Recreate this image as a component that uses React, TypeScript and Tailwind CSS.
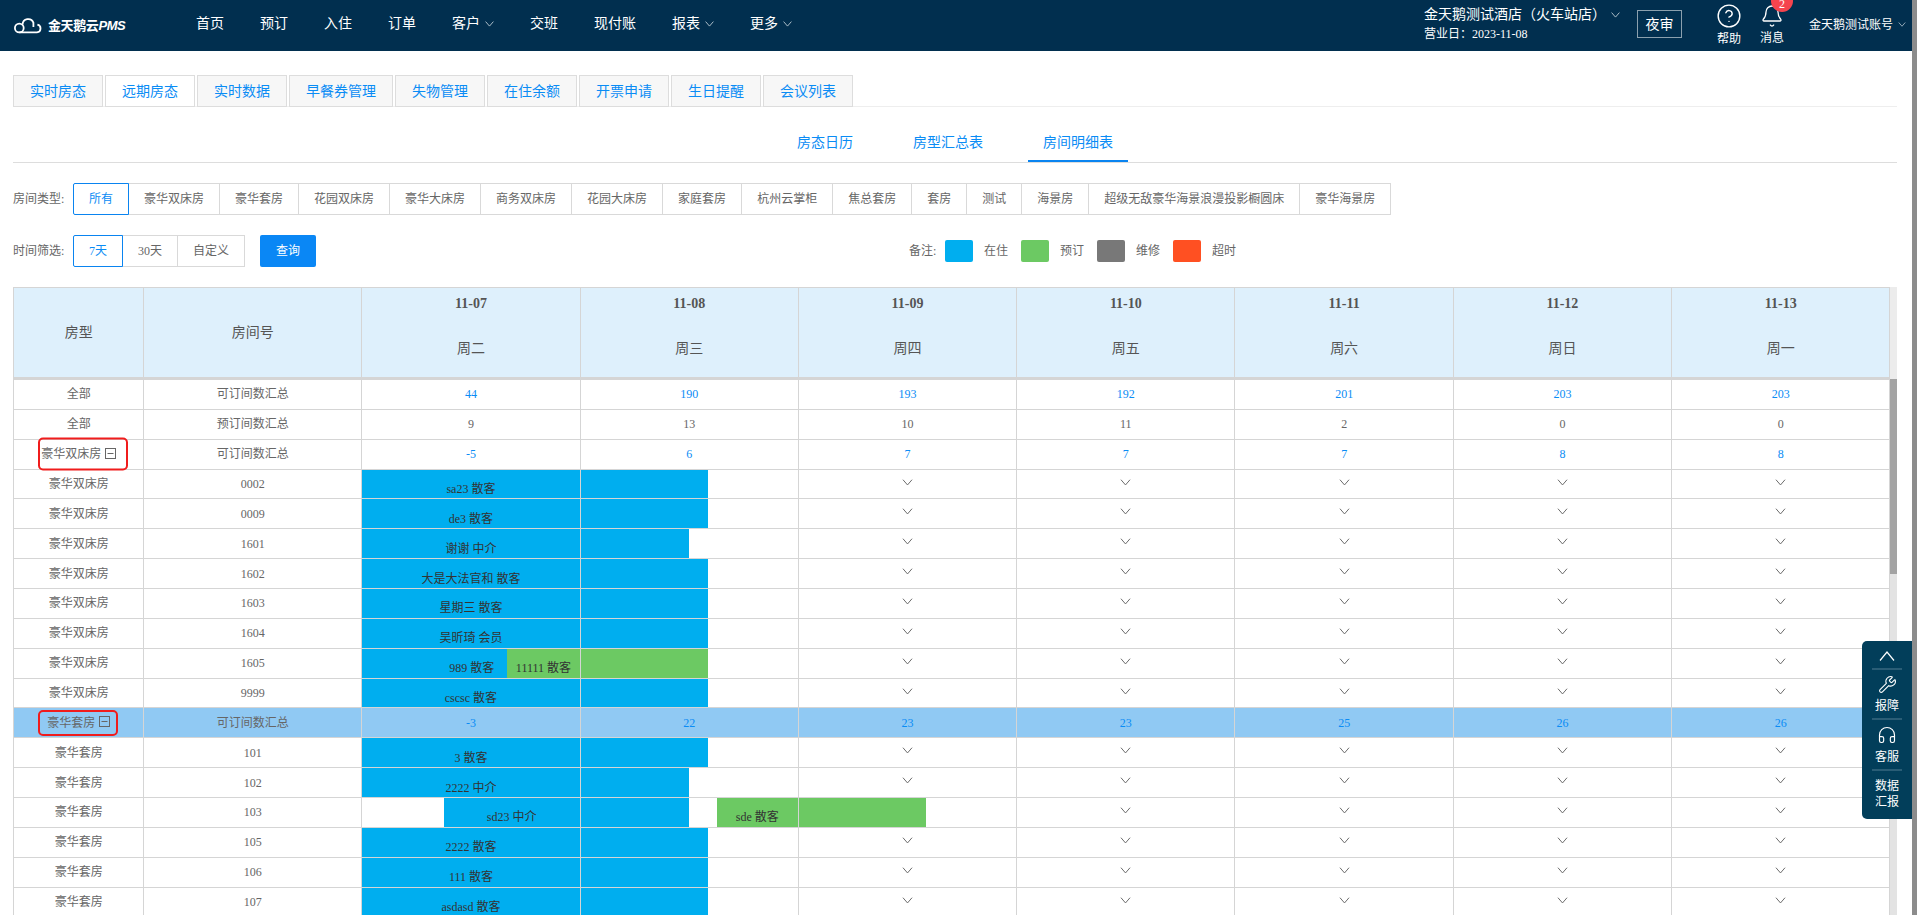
import React from 'react'
import { Bell, CircleHelp, Headphones, Wrench } from 'lucide-react'

const FONT = "font-['Liberation_Serif','Noto_Sans_CJK_SC',serif]"

const navItems = [
  { label: '首页' },
  { label: '预订' },
  { label: '入住' },
  { label: '订单' },
  { label: '客户', more: true },
  { label: '交班' },
  { label: '现付账' },
  { label: '报表', more: true },
  { label: '更多', more: true }
]

const topTabs = ['实时房态', '远期房态', '实时数据', '早餐券管理', '失物管理', '在住余额', '开票申请', '生日提醒', '会议列表']
const roomTypes = ['所有', '豪华双床房', '豪华套房', '花园双床房', '豪华大床房', '商务双床房', '花园大床房', '家庭套房', '杭州云掌柜', '焦总套房', '套房', '测试', '海景房', '超级无敌豪华海景浪漫投影橱圆床', '豪华海景房']
const days = [
  ['11-07', '周二'],
  ['11-08', '周三'],
  ['11-09', '周四'],
  ['11-10', '周五'],
  ['11-11', '周六'],
  ['11-12', '周日'],
  ['11-13', '周一']
]

const Chevron = ({ className }: { className?: string }) => (
  <svg viewBox="0 0 12 8" className={className} fill="none" stroke="currentColor" strokeWidth="1.1">
    <path d="M0.8 0.8 L6 6.8 L11.2 0.8" />
  </svg>
)

const Logo = () => (
  <svg viewBox="0 0 28 17" className="w-[28px] h-[17px]" fill="none" stroke="white" strokeWidth="1.8">
    <circle cx="5.3" cy="11" r="4.4" />
    <path d="M5.3 15.4 H23 A3.9 3.9 0 0 0 23.4 7.7 M8.6 7.6 A5.6 5.6 0 0 1 19.4 5.6 V10" />
  </svg>
)

const Header = () => (
  <div className="h-[51px] bg-[#012f4f] text-white flex items-center shrink-0">
    <div className="w-[196px] flex items-center pl-[14px] shrink-0">
      <Logo />
      <span className="ml-[6px] text-[13px] font-bold font-['Noto_Sans_CJK_SC',sans-serif] whitespace-nowrap tracking-[-0.4px]">
        金天鹅云<i className="font-['Liberation_Sans',sans-serif]">PMS</i>
      </span>
    </div>
    <div className="flex gap-[36px] text-[14px] -mt-[4px]">
      {navItems.map((item) => (
        <div key={item.label} className="flex items-center">
          <span>{item.label}</span>
          {item.more && <Chevron className="ml-[5px] w-[9px] h-[6px] text-[#d0dae1]" />}
        </div>
      ))}
    </div>
    <div className="flex-1" />
    <div className="w-[213px] shrink-0 -mt-[3px]">
      <div className="flex items-center text-[14px] leading-[18px]">
        金天鹅测试酒店（火车站店）
        <Chevron className="ml-[5px] w-[9px] h-[6px] text-[#d0dae1]" />
      </div>
      <div className="text-[12px] leading-[16px] mt-[2px]">营业日：2023-11-08</div>
    </div>
    <div className="w-[45px] h-[28px] border border-[#8ba0ae] flex items-center justify-center text-[14px] shrink-0 -mt-[3px]">夜审</div>
    <div className="ml-[35px] w-[24px] flex flex-col items-center shrink-0">
      <CircleHelp size={26} strokeWidth={1.3} className="-mt-[3px]" />
      <span className="text-[12px] leading-[14px] mt-[3px] whitespace-nowrap">帮助</span>
    </div>
    <div className="relative ml-[19px] w-[24px] flex flex-col items-center shrink-0">
      <Bell size={24} strokeWidth={1.3} className="-mt-[3px]" />
      <span className="text-[12px] leading-[14px] mt-[3px] whitespace-nowrap">消息</span>
      <span className="absolute -top-[17px] left-[11px] w-[22px] h-[22px] rounded-full bg-[#f5444e] flex items-center justify-center text-[12px] pt-[6px]">2</span>
    </div>
    <div className="ml-[25px] flex items-center text-[12px] whitespace-nowrap pr-[6px] -mt-[2px]">
      金天鹅测试账号
      <Chevron className="ml-[5px] w-[8px] h-[5px] text-[#d0dae1]" />
    </div>
  </div>
)

const TopTabs = () => (
  <div className="mt-[24px] h-[32px] flex border-b border-[#eeeeee]">
    {topTabs.map((tab, i) => (
      <div
        key={tab}
        className={`h-[32px] px-[16px] mr-[2px] border border-[#dddddd] flex items-center text-[14px] text-[#0a8cf5] whitespace-nowrap ${i === 1 ? 'bg-white' : 'bg-[#f7f7f7]'}`}
      >
        {tab}
      </div>
    ))}
  </div>
)

const SubTabs = () => (
  <div className="h-[56px] flex justify-center items-end gap-[30px] border-b border-[#dddddd]">
    {['房态日历', '房型汇总表', '房间明细表'].map((tab, i) => (
      <div
        key={tab}
        className={`h-[37px] px-[15px] flex items-center text-[14px] text-[#0a8cf5] border-b-2 ${i === 2 ? 'border-[#0a84f0]' : 'border-transparent'}`}
      >
        {tab}
      </div>
    ))}
  </div>
)

const RoomTypes = () => (
  <div className="mt-[20px] h-[32px] flex items-center">
    <span className="w-[60px] text-[12px] text-[#666666] shrink-0">房间类型:</span>
    {roomTypes.map((t, i) => (
      <div
        key={t}
        className={`h-[32px] px-[15px] -mr-px flex items-center text-[12px] whitespace-nowrap border ${i === 0 ? 'relative z-10 border-[#0a84f0] text-[#0a8cf5] rounded-l-[2px]' : 'border-[#d9d9d9] text-[#666666]'}`}
      >
        {t}
      </div>
    ))}
  </div>
)

const legend = [
  ['在住', 'bg-[#00aeef]'],
  ['预订', 'bg-[#6cc963]'],
  ['维修', 'bg-[#787878]'],
  ['超时', 'bg-[#ff5022]']
]

const TimeFilter = () => (
  <div className="mt-[20px] h-[32px] flex items-center">
    <span className="w-[60px] text-[12px] text-[#666666] shrink-0">时间筛选:</span>
    {['7天', '30天', '自定义'].map((t, i) => (
      <div
        key={t}
        className={`h-[32px] -mr-px flex items-center justify-center text-[12px] border ${i === 0 ? 'relative z-10 w-[50px] border-[#0a84f0] text-[#0a8cf5] rounded-l-[2px]' : i === 1 ? 'w-[56px] border-[#d9d9d9] text-[#666666]' : 'w-[68px] border-[#d9d9d9] text-[#666666]'}`}
      >
        {t}
      </div>
    ))}
    <div className="ml-[16px] w-[56px] h-[32px] rounded-[2px] bg-[#0a87f5] text-white text-[12px] flex items-center justify-center">查询</div>
    <span className="ml-[593px] w-[36px] text-[12px] text-[#666666]">备注:</span>
    {legend.map(([label, color]) => (
      <div key={label} className="w-[76px] flex items-center">
        <span className={`w-[28px] h-[22px] rounded-[2px] ${color}`} />
        <span className="ml-[11px] text-[12px] text-[#666666]">{label}</span>
      </div>
    ))}
  </div>
)

const COLS = 'grid grid-cols-[130.3px_218px_repeat(7,218.3px)]'
const cellBase = 'border-r border-[#d5d5d5] flex items-center justify-center min-w-0'

const TableHead = () => (
  <div className={`${COLS} h-[93px] bg-[#def0fc] border-y border-b-[3px] border-[#d5d5d5] text-[14px] text-[#555555]`}>
    <div className={cellBase}>房型</div>
    <div className={cellBase}>房间号</div>
    {days.map(([date, week]) => (
      <div key={date} className={`${cellBase} flex-col pb-[13px]`}>
        <span className="font-bold leading-[18px]">{date}</span>
        <span className="leading-[18px] mt-[27px]">{week}</span>
      </div>
    ))}
  </div>
)

type Bar = { text: string; to: string }
type Row = {
  type: string
  room: string
  nums?: (string | number)[]
  grey?: boolean
  fold?: string
  hi?: boolean
  bar?: Bar
  custom?: '1605' | '103'
}

const FULL = 'w-[127px]'
const SHORT = 'w-[108px]'

const rows: Row[] = [
  { type: '全部', room: '可订间数汇总', nums: [44, 190, 193, 192, 201, 203, 203] },
  { type: '全部', room: '预订间数汇总', nums: [9, 13, 10, 11, 2, 0, 0], grey: true },
  { type: '豪华双床房', room: '可订间数汇总', nums: [-5, 6, 7, 7, 7, 8, 8], fold: 'w-[90px] h-[33px]' },
  { type: '豪华双床房', room: '0002', bar: { text: 'sa23 散客', to: FULL } },
  { type: '豪华双床房', room: '0009', bar: { text: 'de3 散客', to: FULL } },
  { type: '豪华双床房', room: '1601', bar: { text: '谢谢 中介', to: SHORT } },
  { type: '豪华双床房', room: '1602', bar: { text: '大是大法官和 散客', to: FULL } },
  { type: '豪华双床房', room: '1603', bar: { text: '星期三 散客', to: FULL } },
  { type: '豪华双床房', room: '1604', bar: { text: '吴昕琦 会员', to: FULL } },
  { type: '豪华双床房', room: '1605', custom: '1605' },
  { type: '豪华双床房', room: '9999', bar: { text: 'cscsc 散客', to: FULL } },
  { type: '豪华套房', room: '可订间数汇总', nums: [-3, 22, 23, 23, 25, 26, 26], fold: 'w-[80px] h-[26px]', hi: true },
  { type: '豪华套房', room: '101', bar: { text: '3 散客', to: FULL } },
  { type: '豪华套房', room: '102', bar: { text: '2222 中介', to: SHORT } },
  { type: '豪华套房', room: '103', custom: '103' },
  { type: '豪华套房', room: '105', bar: { text: '2222 散客', to: FULL } },
  { type: '豪华套房', room: '106', bar: { text: '111 散客', to: FULL } },
  { type: '豪华套房', room: '107', bar: { text: 'asdasd 散客', to: FULL } }
]

const barText = 'pt-[10px] text-[12px] leading-none text-[#333333] whitespace-nowrap'

const EmptyCell = () => (
  <div className={`${cellBase} text-[#666666]`}>
    <Chevron className="w-[11px] h-[7px] -translate-y-[2px]" />
  </div>
)

const BarCells = ({ row }: { row: Row }) => {
  if (row.custom === '1605') {
    return (
      <>
        <div className={`${cellBase} !justify-start`}>
          <div className={`h-full w-[145px] bg-[#00aeef] flex items-center justify-end pr-[13px] ${barText}`}>989 散客</div>
          <div className={`h-full flex-1 bg-[#6cc963] flex items-center justify-center ${barText}`}>11111 散客</div>
        </div>
        <div className={`${cellBase} !justify-start`}>
          <div className={`h-full ${FULL} bg-[#6cc963]`} />
        </div>
        {[0, 1, 2, 3, 4].map((i) => <EmptyCell key={i} />)}
      </>
    )
  }
  if (row.custom === '103') {
    return (
      <>
        <div className={`${cellBase} !justify-end`}>
          <div className={`h-full w-[136px] bg-[#00aeef] flex items-center justify-center ${barText}`}>sd23 中介</div>
        </div>
        <div className={`${cellBase} !justify-start`}>
          <div className={`h-full ${SHORT} bg-[#00aeef]`} />
          <div className="w-[28px]" />
          <div className={`h-full flex-1 bg-[#6cc963] flex items-center justify-center ${barText}`}>sde 散客</div>
        </div>
        <div className={`${cellBase} !justify-start`}>
          <div className={`h-full ${FULL} bg-[#6cc963]`} />
        </div>
        {[0, 1, 2, 3].map((i) => <EmptyCell key={i} />)}
      </>
    )
  }
  return (
    <>
      <div className={cellBase}>
        <div className={`h-full w-full bg-[#00aeef] flex items-center justify-center ${barText}`}>{row.bar?.text}</div>
      </div>
      <div className={`${cellBase} !justify-start`}>
        <div className={`h-full ${row.bar?.to} bg-[#00aeef]`} />
      </div>
      {[0, 1, 2, 3, 4].map((i) => <EmptyCell key={i} />)}
    </>
  )
}

const TableRow = ({ row }: { row: Row }) => (
  <div className={`${COLS} h-[29.86px] border-b border-[#d5d5d5] text-[12px] text-[#666666] ${row.hi ? 'bg-[#90c9f3]' : 'bg-white'}`}>
    <div className={`${cellBase} relative`}>
      <span>{row.type}</span>
      {row.fold && (
        <>
          <svg viewBox="0 0 11 11" className="ml-[4px] w-[11px] h-[11px] -translate-y-[1px]" fill="none" stroke="#666666" strokeWidth="1">
            <rect x="0.5" y="0.5" width="10" height="10" />
            <path d="M2.5 5.5 H8.5" />
          </svg>
          <span className={`absolute left-[24px] top-1/2 -translate-y-1/2 rounded-[5px] border-[2.5px] border-[#f01c1c] ${row.fold}`} />
        </>
      )}
    </div>
    <div className={cellBase}>{row.room}</div>
    {row.nums ? (
      row.nums.map((n, i) => (
        <div key={i} className={`${cellBase} ${row.grey ? '' : 'text-[#0a8cf5]'}`}>{n}</div>
      ))
    ) : (
      <BarCells row={row} />
    )}
  </div>
)

const RoomTable = () => (
  <div className="mt-[20px] flex-1 min-h-0 flex overflow-hidden">
    <div className="w-[1877px] shrink-0 border-l border-[#d5d5d5]">
      <TableHead />
      {rows.map((row, i) => (
        <TableRow key={i} row={row} />
      ))}
    </div>
    <div className="w-[7px] shrink-0 bg-[#e3e3e3] flex flex-col">
      <div className="h-[92px] bg-[#ececec]" />
      <div className="h-[195px] bg-[#a3a3a3]" />
    </div>
  </div>
)

const SideDock = () => (
  <div className="absolute right-[5px] top-[641px] w-[50px] h-[178px] rounded-l-[5px] bg-[#023e5a] text-white text-[12px] flex flex-col items-center">
    <svg viewBox="0 0 16 10" className="mt-[10px] w-[16px] h-[10px]" fill="none" stroke="white" strokeWidth="1.2">
      <path d="M1 9.5 L8 1 L15 9.5" />
    </svg>
    <div className="mt-[7px] w-[30px] h-[2px] bg-[#2a5d76]" />
    <Wrench size={19} strokeWidth={1.4} className="mt-[5px]" />
    <span className="mt-[4px] leading-[16px]">报障</span>
    <div className="mt-[4px] w-[30px] h-[2px] bg-[#2a5d76]" />
    <Headphones size={20} strokeWidth={1.4} className="mt-[5px]" />
    <span className="mt-[4px] leading-[16px]">客服</span>
    <div className="mt-[4px] w-[30px] h-[2px] bg-[#2a5d76]" />
    <span className="mt-[7px] leading-[16px] text-center">数据<br />汇报</span>
  </div>
)

const App: React.FC = () => {
  return (
    <div className={`relative w-[1917px] h-[915px] overflow-hidden flex bg-white ${FONT}`}>
      <div className="w-[1912px] h-full flex flex-col shrink-0">
        <Header />
        <div className="flex-1 min-h-0 flex flex-col pl-[13px] pr-[15px]">
          <TopTabs />
          <SubTabs />
          <RoomTypes />
          <TimeFilter />
          <RoomTable />
        </div>
      </div>
      <div className="w-[5px] h-full bg-[#8c8c8c]" />
      <SideDock />
    </div>
  )
}

export default App
